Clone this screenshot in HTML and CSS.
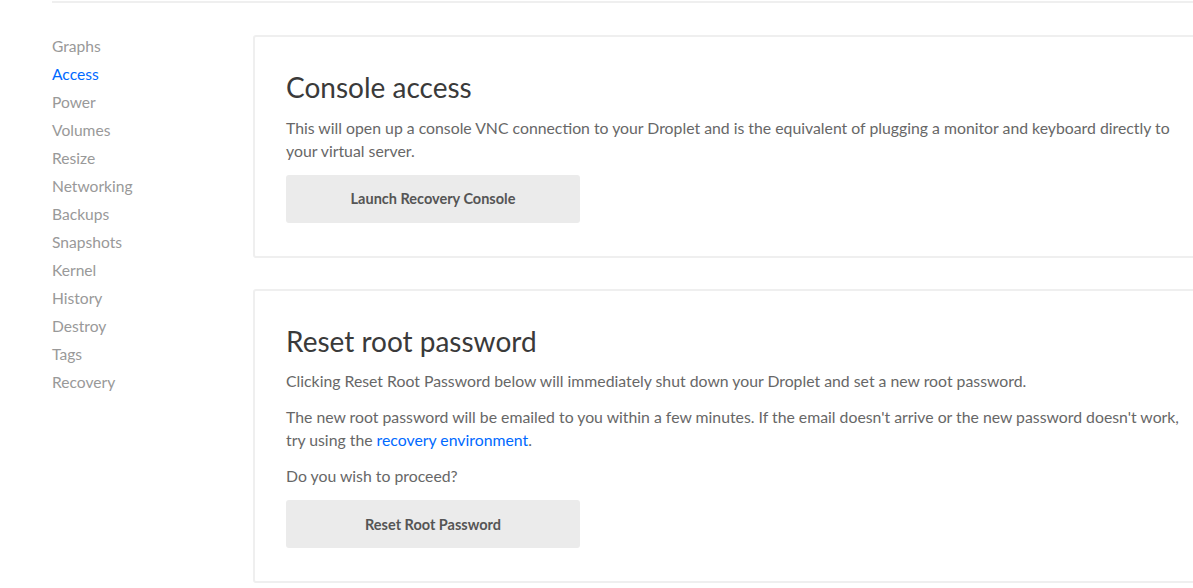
FILE: index.html
```html
<!DOCTYPE html>
<html lang="en">
<head>
<meta charset="utf-8">
<title>Droplet Access</title>
<link rel="stylesheet" href="styles.css">
</head>
<body>
<div class="page">
  <div class="rule"></div>
  <div class="layout">
    <nav class="sidebar">
      <a class="nav-item">Graphs</a>
      <a class="nav-item active">Access</a>
      <a class="nav-item">Power</a>
      <a class="nav-item">Volumes</a>
      <a class="nav-item">Resize</a>
      <a class="nav-item">Networking</a>
      <a class="nav-item">Backups</a>
      <a class="nav-item">Snapshots</a>
      <a class="nav-item">Kernel</a>
      <a class="nav-item">History</a>
      <a class="nav-item">Destroy</a>
      <a class="nav-item">Tags</a>
      <a class="nav-item">Recovery</a>
    </nav>
    <main class="content">
      <section class="card">
        <h2 class="card-title">Console access</h2>
        <p class="card-text">This will open up a console VNC connection to your Droplet and is the equivalent of plugging a monitor and keyboard directly to your virtual server.</p>
        <button class="btn">Launch Recovery Console</button>
      </section>
      <section class="card">
        <h2 class="card-title">Reset root password</h2>
        <p class="card-text">Clicking Reset Root Password below will immediately shut down your Droplet and set a new root password.</p>
        <p class="card-text">The new root password will be emailed to you within a few minutes. If the email doesn't arrive or the new password doesn't work, try using the <a class="link">recovery environment</a>.</p>
        <p class="card-text">Do you wish to proceed?</p>
        <button class="btn">Reset Root Password</button>
      </section>
    </main>
  </div>
</div>
</body>
</html>
```

FILE: styles.css
```css
html, body {
  margin: 0;
  padding: 0;
  background: #fff;
  overflow: hidden;
}
body {
  font-family: Lato, "Liberation Sans", sans-serif;
  color: #676767;
}
.page {
  padding-top: 1px;
}
.rule {
  margin-left: 52px;
  border-top: 2px solid #efefef;
}
.layout {
  display: flex;
  padding-left: 52px;
  padding-top: 29px;
}
.sidebar {
  width: 201px;
  flex: none;
  display: flex;
  flex-direction: column;
}
.nav-item {
  font-size: 15.6px;
  line-height: 28px;
  color: #999;
  text-decoration: none;
}
.nav-item.active {
  color: #0069ff;
}
.content {
  flex: none;
  display: flex;
  flex-direction: column;
  gap: 31px;
  padding-top: 3px;
}
.card {
  width: 910px;
  border: 2px solid #efefef;
  border-radius: 3px;
  padding: 34px 32px 33px 31px;
}
.card-title {
  margin: 0 0 12.5px;
  font-size: 28px;
  line-height: 32px;
  font-weight: 400;
  color: #3a3a3a;
}
.card-text {
  margin: 0 0 13px;
  font-size: 15.8px;
  line-height: 23px;
  color: #676767;
}
.link {
  color: #0069ff;
  text-decoration: none;
}
.btn {
  display: block;
  width: 294px;
  height: 48px;
  border: none;
  border-radius: 3px;
  background: #ebebeb;
  color: #555;
  font-family: Lato, "Liberation Sans", sans-serif;
  font-size: 14.5px;
  font-weight: 700;
  padding: 0;
}
.card-text + .btn {
  margin-top: 10px;
}
```
